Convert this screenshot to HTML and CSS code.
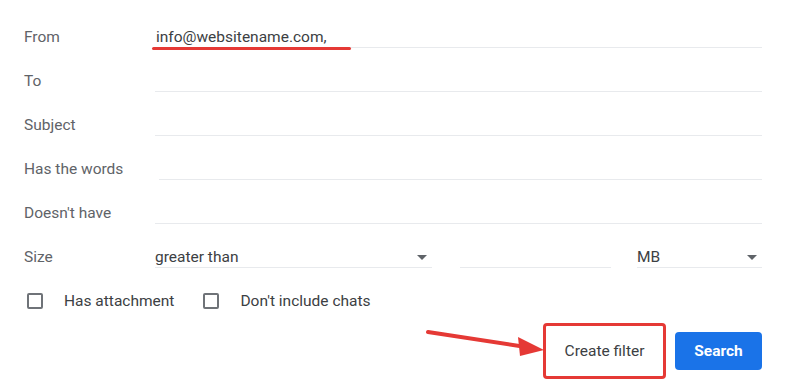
FILE: index.html
```html
<!DOCTYPE html>
<html lang="en">

<head>
    <meta charset="UTF-8">
    <meta name="viewport" content="width=device-width, initial-scale=1.0">
    <title>Create filter</title>
    <link rel="stylesheet" href="styles.css">
</head>
<body>
    <form class="filter">
        <div class="row">
            <label class="label">From</label>
            <div class="field">
                <span class="value marked">info@websitename.com,</span>
            </div>
        </div>
        <div class="row">
            <label class="label">To</label>
            <div class="field"></div>
        </div>
        <div class="row">
            <label class="label">Subject</label>
            <div class="field"></div>
        </div>
        <div class="row">
            <label class="label">Has the words</label>
            <div class="field shifted"></div>
        </div>
        <div class="row">
            <label class="label">Doesn't have</label>
            <div class="field"></div>
        </div>
        <div class="row">
            <label class="label">Size</label>
            <div class="size">
                <div class="field select compare">
                    <span class="value">greater than</span>
                    <span class="caret"></span>
                </div>
                <div class="field amount"></div>
                <div class="field select unit">
                    <span class="value">MB</span>
                    <span class="caret"></span>
                </div>
            </div>
        </div>
        <div class="checks">
            <div class="check">
                <span class="box"></span>
                <span>Has attachment</span>
            </div>
            <div class="check">
                <span class="box"></span>
                <span>Don't include chats</span>
            </div>
        </div>
        <div class="actions">
            <svg class="pointer" width="130" height="30" viewBox="0 0 130 30">
                <line x1="2" y1="5" x2="100" y2="20" stroke="#e53935" stroke-width="4" stroke-linecap="round"/>
                <polygon points="118,23 92,10 94,29" fill="#e53935"/>
            </svg>
            <button type="button" class="create">Create filter</button>
            <button type="button" class="search">Search</button>
        </div>
    </form>
</body>

</html>
```

FILE: styles.css
```css
body {
    margin: 0;
    background-color: #fff;
    font-family: Roboto, "Liberation Sans", Arial, sans-serif;
    font-size: 15.5px;
    color: #5f6368;
}

.filter {
    padding: 4px 24px 0 24px;
}

.row {
    display: grid;
    grid-template-columns: 131px 1fr;
    align-items: end;
    height: 44px;
}

.label {
    line-height: 16px;
    padding-bottom: 3px;
}

.field {
    height: 16px;
    line-height: 16px;
    padding-top: 3px;
    padding-bottom: 2px;
    border-bottom: 1px solid #e8eaed;
}

.field.shifted {
    margin-left: 4px;
}

.value {
    color: #3c4043;
    position: relative;
    display: inline-block;
}

.value.marked {
    padding-left: 1px;
}

.value.marked::after {
    content: "";
    position: absolute;
    left: -3px;
    right: -24px;
    bottom: -5px;
    height: 3px;
    border-radius: 2px;
    background-color: #e53935;
}

.size {
    display: flex;
    align-items: flex-end;
}

.select {
    display: flex;
    justify-content: space-between;
    align-items: center;
}

.compare {
    width: 277px;
}

.amount {
    width: 151px;
    margin-left: 28px;
}

.unit {
    width: 125px;
    margin-left: 26px;
}

.caret {
    width: 0;
    height: 0;
    border-left: 5px solid transparent;
    border-right: 5px solid transparent;
    border-top: 5px solid #5f6368;
    margin-right: 5px;
}

.checks {
    display: flex;
    align-items: center;
    height: 44px;
    margin-top: 11px;
}

.check {
    display: flex;
    align-items: center;
    margin-right: 26px;
    color: #3c4043;
}

.box {
    width: 12px;
    height: 12px;
    border: 2px solid #6f7378;
    border-radius: 2px;
    margin-left: 3px;
    margin-right: 21px;
}

.actions {
    display: flex;
    justify-content: flex-end;
    align-items: center;
    margin-top: 0;
    position: relative;
}

.pointer {
    position: absolute;
    left: 402px;
    top: 4px;
}

button {
    font-family: Roboto, "Liberation Sans", Arial, sans-serif;
    font-size: 15.5px;
    cursor: pointer;
}

.create {
    width: 123px;
    height: 56px;
    background-color: #fff;
    color: #3c4043;
    border: 3px solid #e53935;
    border-radius: 4px;
    padding: 0;
    margin-right: 9px;
}

.search {
    width: 87px;
    height: 38px;
    background-color: #1a73e8;
    color: #fff;
    font-weight: bold;
    border: none;
    border-radius: 4px;
    padding: 0;
}
```
